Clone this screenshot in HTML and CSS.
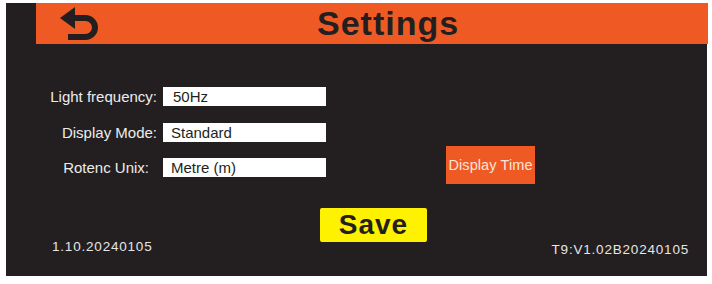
FILE: index.html
```html
<!DOCTYPE html>
<html>
<head>
<meta charset="utf-8">
<link rel="stylesheet" href="styles.css">
</head>
<body>
<div class="panel">
  <header class="header">
    <svg class="back" width="42" height="36" viewBox="0 0 42 36">
      <polygon points="1,12 16,1 16,23" fill="#231f20"/>
      <path d="M14 12 H26.5 A9.5 9.5 0 0 1 26.5 31 H9" fill="none" stroke="#231f20" stroke-width="6"/>
    </svg>
    <h1 class="title">Settings</h1>
  </header>
  <div class="form">
    <div class="label r1">Light frequency:</div>
    <div class="field field-wide r1">50Hz</div>
    <div class="label r2">Display Mode:</div>
    <div class="field r2">Standard</div>
    <div class="label label-short r3">Rotenc Unix:</div>
    <div class="field r3">Metre (m)</div>
    <div class="time-btn r3">Display Time</div>
  </div>
  <div class="footer">
    <div class="ver-left">1.10.20240105</div>
    <div class="save">Save</div>
    <div class="ver-right">T9:V1.02B20240105</div>
  </div>
</div>
</body>
</html>
```
FILE: styles.css
```css
html, body {
  margin: 0;
  padding: 0;
  background: #ffffff;
}
body {
  font-family: "Liberation Sans", Arial, sans-serif;
}
.panel {
  margin: 3px 0 0 6px;
  width: 701px;
  height: 273px;
  background: #231f20;
  display: flex;
  flex-direction: column;
}
.header {
  margin-left: 30px;
  width: 672px;
  height: 41px;
  background: #ef5a24;
  display: flex;
  align-items: center;
  flex-shrink: 0;
}
.back {
  margin-left: 23px;
  flex-shrink: 0;
}
.title {
  margin: 0 0 0 216px;
  font-size: 34px;
  font-weight: bold;
  letter-spacing: 1px;
  color: #231f20;
  line-height: 41px;
}
.form {
  margin-top: 43px;
  display: grid;
  grid-template-columns: 151px 163px 108px 89px;
  column-gap: 6px;
  row-gap: 16.5px;
  grid-template-rows: 19px 19px 19px;
}
.r1 { grid-row: 1; }
.r2 { grid-row: 2; }
.r3 { grid-row: 3; }
.label {
  grid-column: 1;
  text-align: right;
  font-size: 15px;
  line-height: 19px;
  color: #ececec;
}
.label-short {
  padding-right: 8px;
}
.field {
  grid-column: 2;
  background: #ffffff;
  color: #231f20;
  font-size: 15px;
  line-height: 19px;
  padding-left: 8px;
}
.field-wide {
  padding-left: 10px;
}
.time-btn {
  grid-column: 4;
  margin-top: -12px;
  margin-bottom: -7px;
  background: #ef5a24;
  color: #fde6d8;
  font-size: 14.5px;
  display: flex;
  align-items: center;
  justify-content: center;
  white-space: nowrap;
  letter-spacing: 0.1px;
}
.footer {
  margin-top: 31px;
  display: grid;
  grid-template-columns: 268px 107px 1fr;
  padding: 0 18px 0 46px;
}
.ver-left, .ver-right {
  font-size: 13.5px;
  letter-spacing: 0.8px;
  line-height: 16px;
  color: #e6e6e6;
}
.ver-left {
  margin-top: 31px;
}
.ver-right {
  margin-top: 34px;
  text-align: right;
}
.save {
  height: 34px;
  background: #fff200;
  border-radius: 2px;
  color: #231f20;
  font-size: 28px;
  font-weight: bold;
  letter-spacing: 1px;
  line-height: 34px;
  text-align: center;
}
```
